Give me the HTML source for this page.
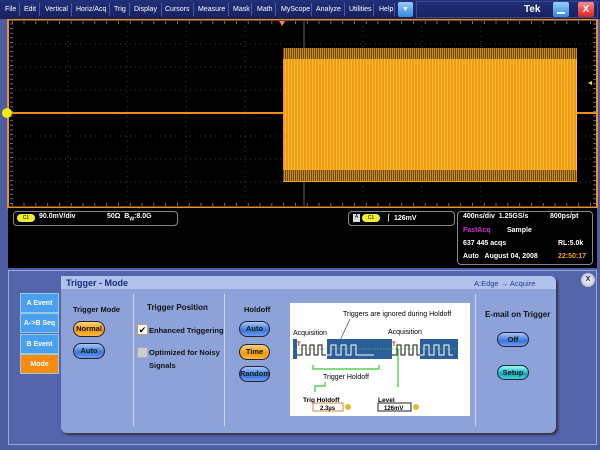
<!DOCTYPE html>
<html><head><style>
*{margin:0;padding:0;box-sizing:border-box}
body{width:600px;height:450px;overflow:hidden;background:#4e5ca2;font-family:"Liberation Sans",Arial,sans-serif;position:relative}
.abs{position:absolute}
#menu{left:0;top:0;width:600px;height:19px;background:linear-gradient(#23307a,#16205e);color:#fff;font-size:7px}
#menu span{position:absolute;top:6px}
.sep{position:absolute;top:3px;width:1px;height:13px;background:#4a5aa0}
.btn{position:absolute;border-radius:9px;font-size:7.5px;font-weight:bold;text-align:center;color:#111;border:1px solid #223}
.blue{background:linear-gradient(#a8c8ff,#3f74d8 60%,#6d9cf0);color:#021}
.orange{background:linear-gradient(#ffd27a,#f09a10 60%,#ffb840)}
.teal{background:linear-gradient(#9ff,#1ab 60%,#4cd)}
.tab{position:absolute;left:20px;width:39px;height:20px;color:#fff;font-size:7px;font-weight:bold;text-align:center;line-height:20px;background:#49a0f0;border:1px solid #9cd}
.hd{position:absolute;font-size:7.5px;font-weight:bold;color:#111}
.ro{position:absolute;color:#fff;font-size:7px;font-weight:bold}
</style></head><body>
<div id="menu" class="abs">
<span style="left:5px">File</span><div class="sep" style="left:19px"></div>
<span style="left:24px">Edit</span><div class="sep" style="left:39px"></div>
<span style="left:45px">Vertical</span><div class="sep" style="left:71px"></div>
<span style="left:76px">Horiz/Acq</span><div class="sep" style="left:109px"></div>
<span style="left:114px">Trig</span><div class="sep" style="left:129px"></div>
<span style="left:134px">Display</span><div class="sep" style="left:161px"></div>
<span style="left:165px">Cursors</span><div class="sep" style="left:193px"></div>
<span style="left:198px">Measure</span><div class="sep" style="left:228px"></div>
<span style="left:233px">Mask</span><div class="sep" style="left:251px"></div>
<span style="left:257px">Math</span><div class="sep" style="left:275px"></div>
<span style="left:281px">MyScope</span><div class="sep" style="left:311px"></div>
<span style="left:316px">Analyze</span><div class="sep" style="left:344px"></div>
<span style="left:349px">Utilities</span><div class="sep" style="left:373px"></div>
<span style="left:379px">Help</span><div class="sep" style="left:394px"></div>
<div class="abs" style="left:398px;top:2px;width:15px;height:15px;background:linear-gradient(#9cf,#38d);border-radius:2px;color:#fff;font-size:7px;text-align:center;line-height:15px">▼</div>
<div class="abs" style="left:416px;top:1px;width:182px;height:17px;border:1px solid #3a4a90"></div>
<span style="left:524px;top:4px;font-size:10px;font-weight:bold">Tek</span>
<div class="abs" style="left:553px;top:2px;width:16px;height:15px;background:linear-gradient(#9cf,#38d);border-radius:2px"><div class="abs" style="left:4px;top:10px;width:8px;height:2px;background:#fff"></div></div>
<div class="abs" style="left:578px;top:2px;width:16px;height:15px;background:linear-gradient(#f88,#d22);border-radius:2px;color:#fff;font-size:10px;text-align:center;line-height:15px;font-weight:bold">X</div>
</div>

<svg class="abs" style="left:0;top:19px" width="600" height="190">
<defs>
<pattern id="wv" width="3" height="10" patternUnits="userSpaceOnUse">
<rect width="3" height="10" fill="#f39a12"/><rect x="0" width="1" height="10" fill="#ffc040"/>
</pattern>
<pattern id="tp" width="2" height="10" patternUnits="userSpaceOnUse">
<rect width="2" height="10" fill="#6a4a10"/><rect x="0" width="1" height="10" fill="#d08a18"/>
</pattern>
<pattern id="tk" width="11.8" height="4" patternUnits="userSpaceOnUse">
<rect x="0" width="0.8" height="4" fill="#888"/>
</pattern>
<pattern id="tkv" width="4" height="4.6" patternUnits="userSpaceOnUse">
<rect y="0" width="4" height="0.8" fill="#888"/>
</pattern>
</defs>
<rect x="8" y="0.5" width="589" height="188" fill="#000" stroke="#e8902a" stroke-width="2"/>
<rect x="10" y="2" width="586" height="3" fill="url(#tk)"/>
<rect x="10" y="184" width="586" height="3" fill="url(#tk)"/>
<rect x="10" y="2" width="3" height="185" fill="url(#tkv)"/>
<rect x="593" y="2" width="3" height="185" fill="url(#tkv)"/>
<g stroke="#555" stroke-width="0.7" stroke-dasharray="1 4">
<line x1="68" y1="2" x2="68" y2="187"/><line x1="127" y1="2" x2="127" y2="187"/><line x1="186" y1="2" x2="186" y2="187"/><line x1="245" y1="2" x2="245" y2="187"/><line x1="363" y1="2" x2="363" y2="187"/><line x1="422" y1="2" x2="422" y2="187"/><line x1="481" y1="2" x2="481" y2="187"/><line x1="540" y1="2" x2="540" y2="187"/>
<line x1="10" y1="25" x2="596" y2="25"/><line x1="10" y1="48" x2="596" y2="48"/><line x1="10" y1="71" x2="596" y2="71"/><line x1="10" y1="117" x2="596" y2="117"/><line x1="10" y1="140" x2="596" y2="140"/><line x1="10" y1="163" x2="596" y2="163"/>
</g>
<g stroke="#777" stroke-width="0.8"><line x1="304" y1="2" x2="304" y2="187"/><line x1="10" y1="94" x2="596" y2="94"/></g>
<rect x="283" y="29" width="294" height="134" fill="url(#wv)"/>
<rect x="283" y="29" width="294" height="11" fill="url(#tp)"/>
<rect x="283" y="151" width="294" height="11" fill="url(#tp)"/>
<line x1="12" y1="94" x2="283" y2="94" stroke="#f08a10" stroke-width="2"/>
<line x1="577" y1="94" x2="597" y2="94" stroke="#f08a10" stroke-width="2"/>
<polygon points="279,2 285,2 282,7" fill="#f88060"/>
<circle cx="7" cy="94" r="5" fill="#ee0"/>
<polygon points="588,64 592,62 592,66" fill="#ee0"/>
</svg>

<div class="abs" style="left:8px;top:208px;width:589px;height:60px;background:#000"></div>
<div class="abs" style="left:13px;top:211px;width:165px;height:15px;border:1px solid #888;border-radius:4px"></div>
<div class="abs" style="left:17px;top:214px;width:18px;height:8px;background:#ee3;border-radius:4px;font-size:5px;text-align:center;line-height:8px">C1</div>
<div class="ro" style="left:39px;top:213px">90.0mV/div</div>
<div class="ro" style="left:107px;top:213px">50Ω &nbsp;B<sub style="font-size:5px">W</sub>:8.0G</div>
<div class="abs" style="left:348px;top:211px;width:107px;height:15px;border:1px solid #888;border-radius:4px"></div>
<div class="abs" style="left:353px;top:214px;width:7px;height:8px;background:#ddd;font-size:5px;text-align:center">A</div>
<div class="abs" style="left:362px;top:214px;width:18px;height:8px;background:#ee3;border-radius:4px;font-size:5px;text-align:center;line-height:8px">C1</div>
<div class="ro" style="left:385px;top:213px">⎰ 126mV</div>
<div class="abs" style="left:457px;top:211px;width:136px;height:54px;border:1px solid #888;border-radius:4px"></div>
<div class="ro" style="left:463px;top:213px">400ns/div &nbsp;1.25GS/s</div><div class="ro" style="left:550px;top:213px">800ps/pt</div>
<div class="ro" style="left:463px;top:227px;color:#d030d0">FastAcq</div><div class="ro" style="left:507px;top:227px">Sample</div>
<div class="ro" style="left:463px;top:240px">637 445 acqs</div><div class="ro" style="left:558px;top:240px">RL:5.0k</div>
<div class="ro" style="left:463px;top:253px">Auto &nbsp; August 04, 2008</div><div class="ro" style="left:558px;top:253px;color:#f0a030">22:50:17</div>

<div class="abs" style="left:8px;top:270px;width:589px;height:175px;border:1px solid #9aa8d8;background:#5464ab"></div>
<div class="abs" style="left:61px;top:276px;width:495px;height:157px;background:#8ca2d8;border-radius:0 6px 6px 6px;box-shadow:2px 2px 2px #334"></div>
<div class="abs" style="left:61px;top:276px;width:495px;height:13px;background:#b0c2ec;border-radius:0 6px 0 0"></div>
<div class="abs" style="left:66px;top:278px;font-size:9px;font-weight:bold;color:#1a2a7a">Trigger - Mode</div>
<div class="abs" style="left:474px;top:279px;font-size:7.5px;color:#223a90">A:Edge → Acquire</div>
<div class="abs" style="left:581px;top:273px;width:14px;height:14px;border-radius:7px;background:radial-gradient(#fff,#aab);font-size:7px;font-weight:bold;text-align:center;line-height:14px;color:#223">X</div>

<div class="tab" style="top:293px">A Event</div>
<div class="tab" style="top:313px">A->B Seq</div>
<div class="tab" style="top:334px">B Event</div>
<div class="tab" style="top:354px;background:#f88a10">Mode</div>

<div class="abs" style="left:133px;top:294px;width:1px;height:132px;background:#c8d4f0"></div>
<div class="abs" style="left:224px;top:294px;width:1px;height:132px;background:#c8d4f0"></div>
<div class="abs" style="left:475px;top:294px;width:1px;height:132px;background:#c8d4f0"></div>

<div class="hd" style="left:73px;top:305px">Trigger Mode</div>
<div class="btn orange" style="left:73px;top:321px;width:32px;height:16px;line-height:14px">Normal</div>
<div class="btn blue" style="left:73px;top:343px;width:32px;height:16px;line-height:14px">Auto</div>

<div class="hd" style="left:147px;top:303px;font-size:8px">Trigger Position</div>
<div class="abs" style="left:137px;top:324px;width:11px;height:11px;background:#fff;border:1px solid #c96;font-size:9px;line-height:10px;text-align:center">✔</div>
<div class="hd" style="left:149px;top:326px">Enhanced Triggering</div>
<div class="abs" style="left:137px;top:347px;width:11px;height:11px;background:#ccc;border:1px solid #aab"></div>
<div class="hd" style="left:149px;top:348px">Optimized for Noisy</div>
<div class="hd" style="left:149px;top:361px">Signals</div>

<div class="hd" style="left:244px;top:305px">Holdoff</div>
<div class="btn blue" style="left:239px;top:321px;width:31px;height:16px;line-height:14px">Auto</div>
<div class="btn orange" style="left:239px;top:344px;width:31px;height:16px;line-height:14px">Time</div>
<div class="btn blue" style="left:239px;top:366px;width:31px;height:16px;line-height:14px">Random</div>

<svg class="abs" style="left:290px;top:303px" width="180" height="113">
<rect width="180" height="113" fill="#fff"/>
<text x="53" y="13" font-size="7" font-family="Liberation Sans">Triggers are ignored during Holdoff</text>
<text x="3" y="32" font-size="7" font-family="Liberation Sans">Acquisition</text>
<text x="98" y="31" font-size="7" font-family="Liberation Sans">Acquisition</text>
<line x1="60" y1="16" x2="47" y2="44" stroke="#333" stroke-width="0.6"/>
<rect x="3" y="36" width="165" height="20" fill="#2c5e9a"/>
<rect x="7" y="36" width="30" height="20" fill="#fff"/>
<rect x="102" y="36" width="28" height="20" fill="#fff"/>
<line x1="3" y1="46" x2="168" y2="46" stroke="#4c4" stroke-dasharray="1.5 1.5" stroke-width="0.8"/>
<path d="M7 52h5v-10h4v10h4v-10h4v10h4v-10h4v10h4" fill="none" stroke="#111" stroke-width="1"/>
<path d="M37 52h4v-10h5v10h5v-10h5v10h5v-10h5v10h18" fill="none" stroke="#fff" stroke-width="1"/>
<path d="M102 52h5v-10h4v10h4v-10h4v10h4v-10h4v10h3" fill="none" stroke="#111" stroke-width="1"/>
<path d="M130 52h4v-10h5v10h5v-10h5v10h5v-10h5v10h4" fill="none" stroke="#fff" stroke-width="1"/>
<text x="7" y="43" font-size="6" fill="#d00" font-weight="bold">T</text>
<text x="102" y="43" font-size="6" fill="#d00" font-weight="bold">T</text>
<path d="M23 62v4h66v-4" fill="none" stroke="#3c3" stroke-width="1.2"/>
<text x="33" y="76" font-size="7" font-family="Liberation Sans">Trigger Holdoff</text>
<path d="M35 79v4h-10v6" fill="none" stroke="#3c3" stroke-width="1.2"/>
<line x1="108" y1="46" x2="108" y2="84" stroke="#3c3" stroke-width="1.2"/>
<text x="13" y="99" font-size="6.5" font-weight="bold" font-family="Liberation Sans">Trig Holdoff</text>
<rect x="23" y="100" width="30" height="8" fill="#fff" stroke="#c84"/>
<text x="30" y="107" font-size="6" font-weight="bold" font-family="Liberation Sans">2.3µs</text>
<circle cx="58" cy="104" r="3" fill="#db3"/>
<text x="88" y="99" font-size="6.5" font-weight="bold" font-family="Liberation Sans">Level</text>
<rect x="88" y="100" width="33" height="8" fill="#fff" stroke="#222"/>
<text x="94" y="107" font-size="6" font-weight="bold" font-family="Liberation Sans">126mV</text>
<circle cx="126" cy="104" r="3" fill="#db3"/>
</svg>

<div class="hd" style="left:485px;top:310px;font-size:8px">E-mail on Trigger</div>
<div class="btn blue" style="left:497px;top:332px;width:32px;height:15px;line-height:13px">Off</div>
<div class="btn teal" style="left:497px;top:365px;width:32px;height:15px;line-height:13px">Setup</div>
</body></html>
